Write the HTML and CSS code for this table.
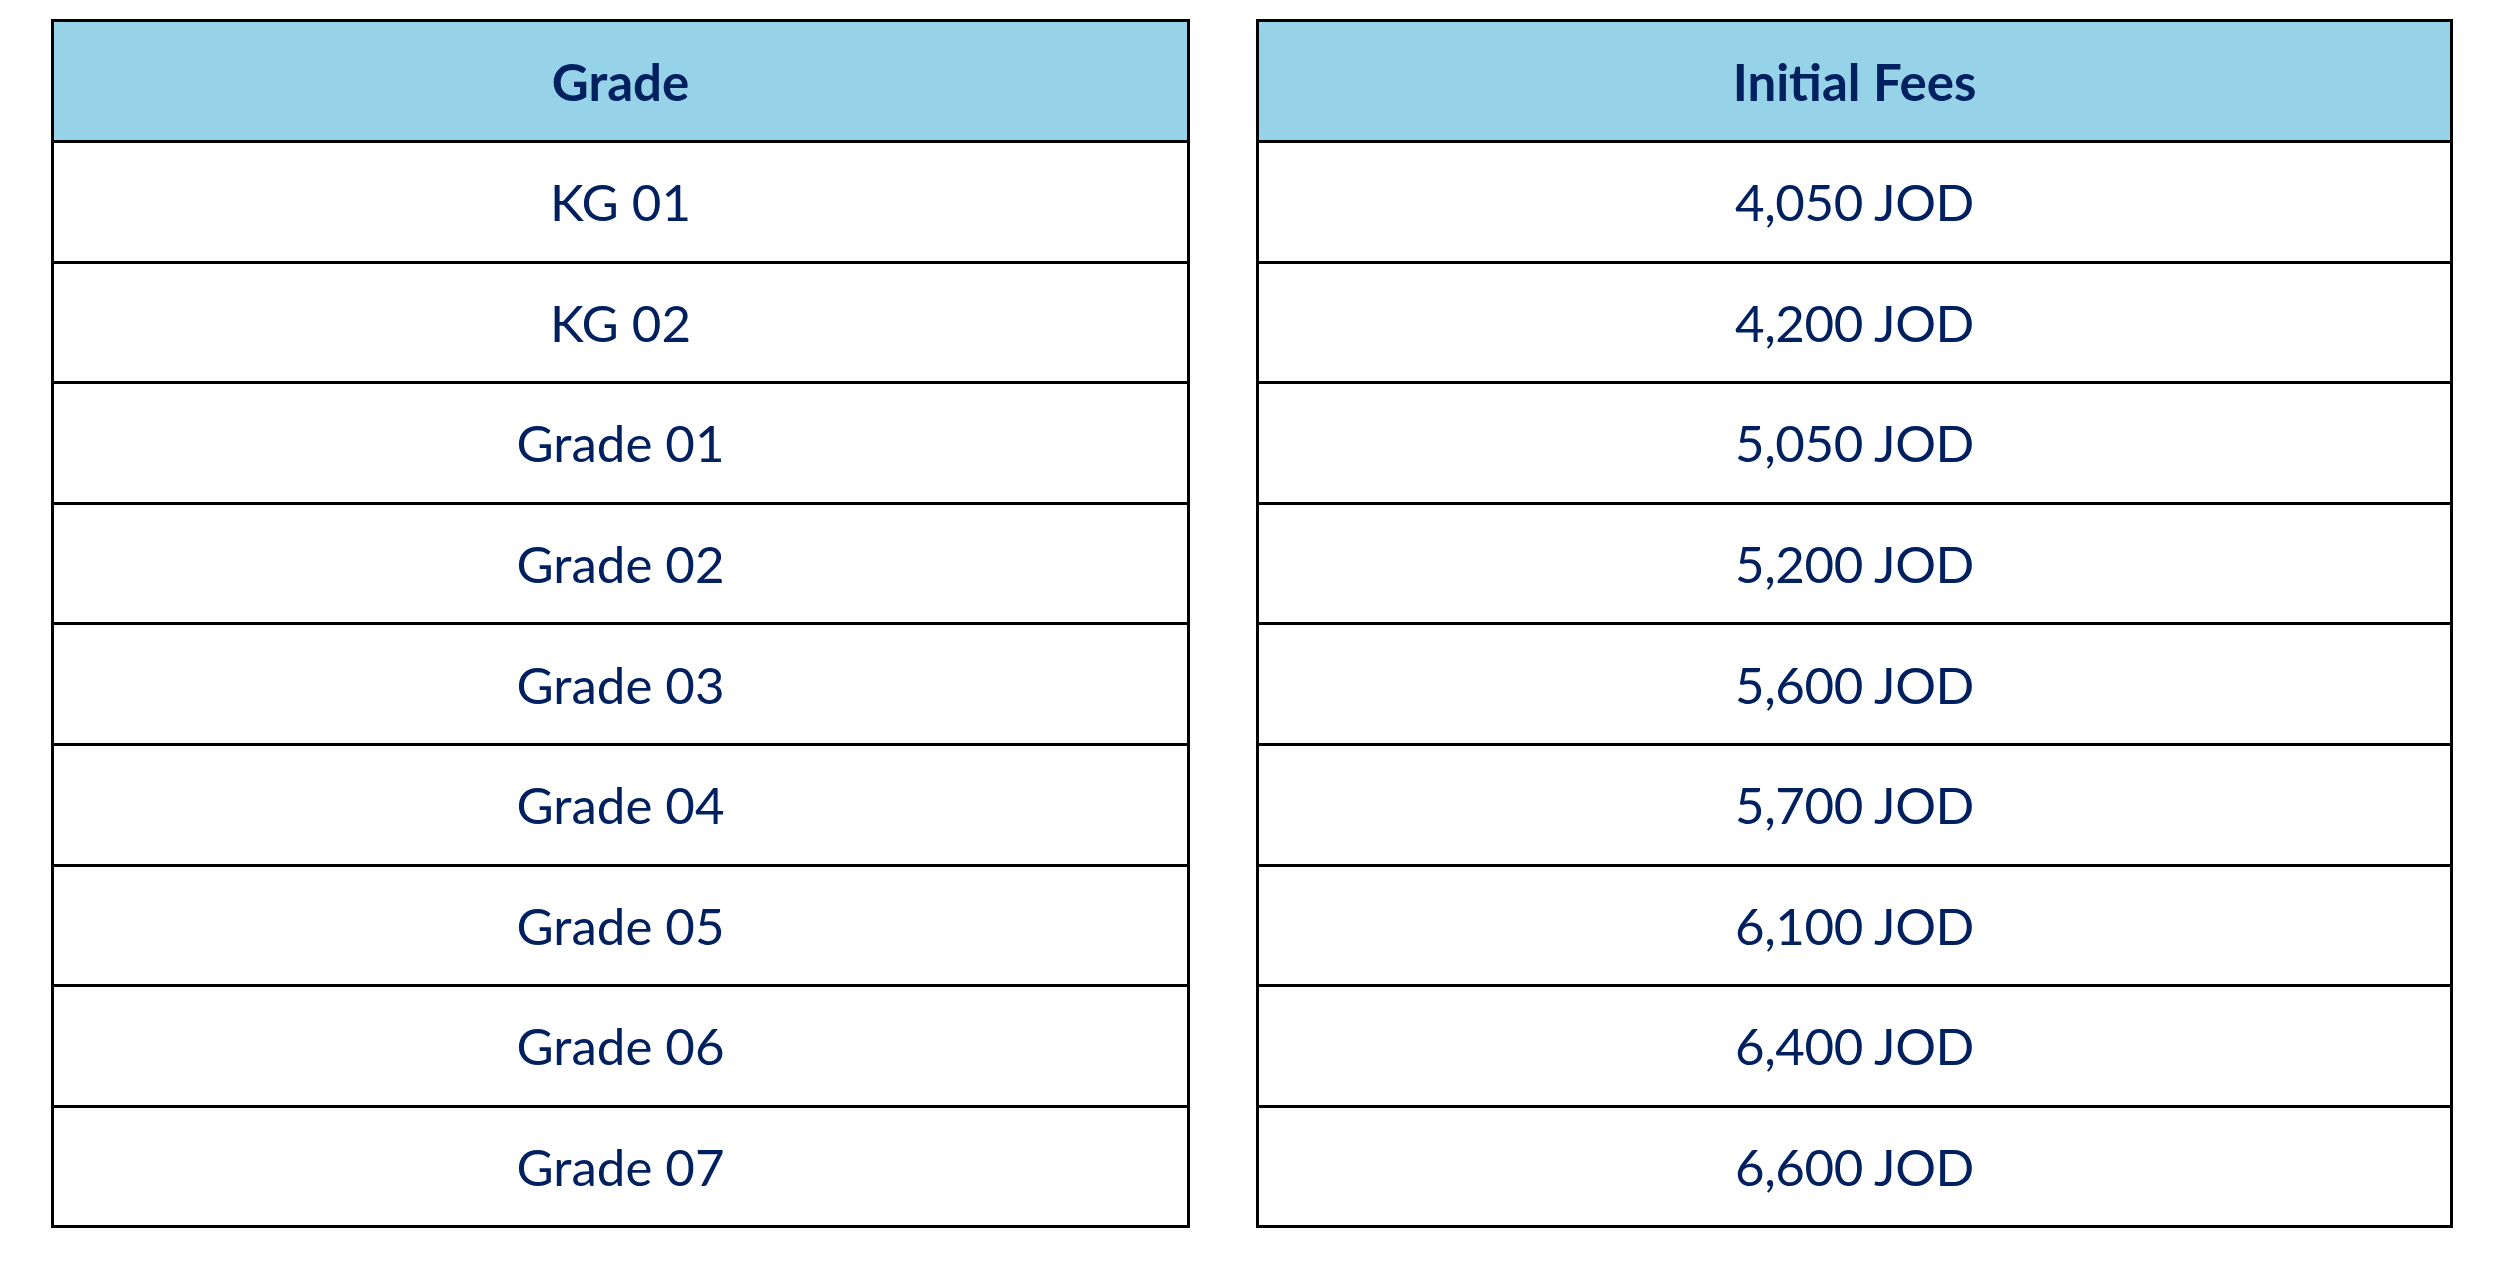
FILE: index.html
```html
<!DOCTYPE html>
<html>
<head>
<meta charset="utf-8">
<link rel="stylesheet" href="styles.css">
</head>
<body>
<div class="wrap">
  <div class="tbl tbl-left">
    <div class="cell head">Grade</div>
    <div class="cell">KG 01</div>
    <div class="cell">KG 02</div>
    <div class="cell">Grade 01</div>
    <div class="cell">Grade 02</div>
    <div class="cell">Grade 03</div>
    <div class="cell">Grade 04</div>
    <div class="cell">Grade 05</div>
    <div class="cell">Grade 06</div>
    <div class="cell">Grade 07</div>
  </div>
  <div class="tbl tbl-right">
    <div class="cell head">Initial Fees</div>
    <div class="cell">4,050 JOD</div>
    <div class="cell">4,200 JOD</div>
    <div class="cell">5,050 JOD</div>
    <div class="cell">5,200 JOD</div>
    <div class="cell">5,600 JOD</div>
    <div class="cell">5,700 JOD</div>
    <div class="cell">6,100 JOD</div>
    <div class="cell">6,400 JOD</div>
    <div class="cell">6,600 JOD</div>
  </div>
</div>
</body>
</html>
```
FILE: styles.css
```css
html, body {
  margin: 0;
  padding: 0;
  background: #ffffff;
}
body {
  padding: 19px 0 0 51px;
  font-family: Lato, "Noto Sans", "Liberation Sans", sans-serif;
  color: #002060;
}
.wrap {
  display: flex;
  gap: 66px;
  align-items: flex-start;
}
.tbl {
  border: 3px solid #000;
  display: flex;
  flex-direction: column;
  box-sizing: border-box;
}
.tbl-left { width: 1139px; }
.tbl-right { width: 1197px; }
.cell {
  height: 117.6px;
  display: flex;
  align-items: center;
  justify-content: center;
  border-top: 3px solid #000;
  font-size: 51px;
  background: #fff;
}
.tbl-right .cell {
  letter-spacing: -0.4px;
}
.cell.head {
  border-top: none;
  height: 118px;
  background: #96d3e8;
  font-weight: bold;
}
.tbl-right .cell.head {
  letter-spacing: 0;
}
```
